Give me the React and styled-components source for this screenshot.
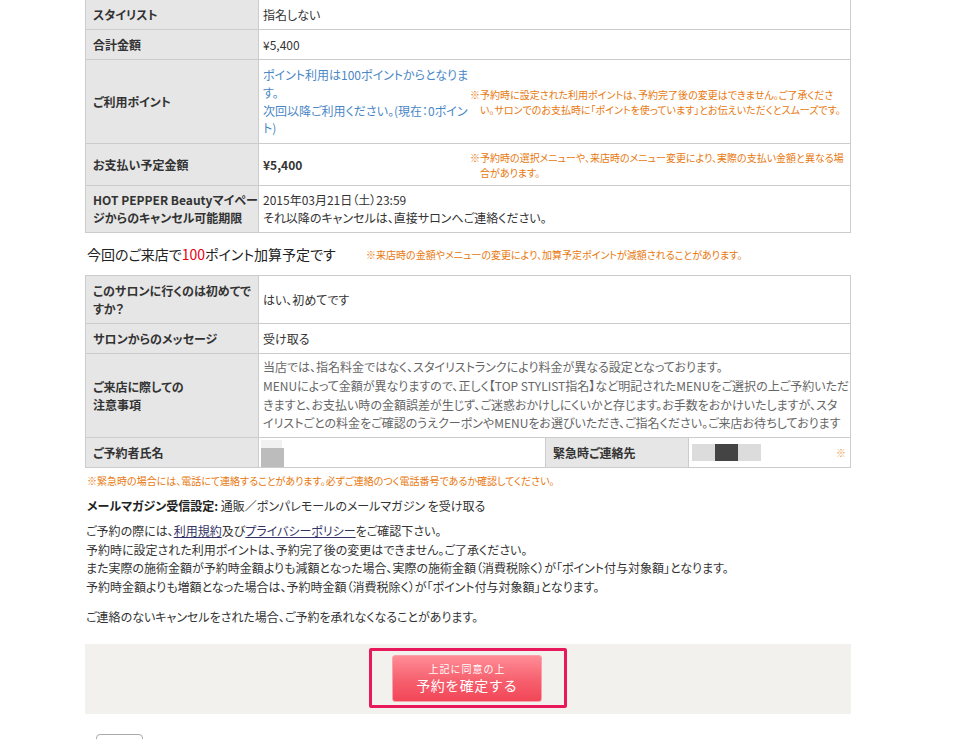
import styled, { createGlobalStyle } from 'styled-components';

const GlobalStyle = createGlobalStyle`
  body {
    margin: 0;
    background: #fff;
    color: #333;
    font-family: "Noto Sans CJK JP", "Noto Sans", sans-serif;
    font-size: 12px;
    font-feature-settings: "palt";
  }
`;

const Page = styled.div`
  width: 766px;
  margin: -1px 0 0 85px;
`;

const Table = styled.table`
  width: 100%;
  border-collapse: collapse;
  table-layout: fixed;
`;

const Col = styled.col`
  width: ${p => (p.$w ? `${p.$w}px` : 'auto')};
`;

const Row = styled.tr`
  height: ${p => p.$h}px;
`;

const Th = styled.th`
  background: #e6e6e6;
  border: 1px solid #ccc;
  padding: 0 7px;
  text-align: left;
  font-weight: bold;
  line-height: 18px;
  white-space: nowrap;
`;

const Td = styled.td`
  border: 1px solid #ccc;
  padding: ${p => p.$pad || '0 4px'};
  line-height: ${p => p.$lh || 18}px;
  color: ${p => (p.$muted ? '#666' : '#333')};
  vertical-align: ${p => p.$va || 'middle'};
  white-space: nowrap;
  overflow: hidden;
`;

const Split = styled.div`
  display: flex;
  align-items: center;
`;

const PointInfo = styled.div`
  width: 207px;
  flex: none;
  color: #4a87c6;
  line-height: 17.7px;
`;

const Amount = styled.div`
  width: 207px;
  flex: none;
  font-weight: bold;
`;

const Note = styled.p`
  margin: 0;
  padding-left: 1em;
  text-indent: -1em;
  font-size: 10px;
  line-height: 15px;
  color: #e8780e;
  white-space: nowrap;
`;

const Lead = styled.div`
  display: flex;
  align-items: center;
  height: 42px;
  padding-left: 2px;
`;

const LeadTitle = styled.h3`
  margin: 0;
  width: 279px;
  flex: none;
  font-size: 14px;
  font-weight: normal;
  color: #222;
`;

const Em = styled.span`
  color: #e60012;
`;

const Blur = styled.div`
  display: flex;
  flex-direction: column;
  align-items: flex-start;
`;

const Swatch = styled.span`
  display: block;
  width: ${p => p.$w}px;
  height: ${p => p.$h}px;
  background: ${p => p.$c};
`;

const Contact = styled.div`
  display: flex;
  align-items: center;
`;

const Mark = styled.span`
  margin-left: auto;
  font-size: 10px;
  color: #e8a050;
`;

const Caution = styled.p`
  margin: 5px 0 0 2px;
  font-size: 10px;
  line-height: 15px;
  color: #e8780e;
`;

const MailSetting = styled.p`
  margin: 9px 0 0 2px;
  line-height: 18px;
  b {
    font-weight: bold;
    color: #222;
  }
`;

const Text = styled.p`
  margin: ${p => p.$m || '7px 0 0 1px'};
  line-height: 18.7px;
`;

const Link = styled.a`
  color: #333366;
  text-decoration: underline;
`;

const ConfirmBar = styled.div`
  display: flex;
  justify-content: center;
  margin-top: 17px;
  padding: 4px 0 6px;
  background: #f2f1ee;
`;

const Highlight = styled.div`
  display: flex;
  justify-content: center;
  width: 198px;
  padding: 4px 22px 3px 20px;
  box-sizing: border-box;
  border: 3px solid #e8185c;
  border-radius: 2px;
`;

const ConfirmButton = styled.button`
  display: flex;
  flex-direction: column;
  align-items: center;
  justify-content: center;
  gap: 1px;
  width: 150px;
  height: 47px;
  flex: none;
  padding: 0;
  border: 1px solid #f8a2ab;
  border-radius: 3px;
  background: linear-gradient(#ff8c96, #f6606e 55%, #f24657);
  color: #fff;
  font-family: inherit;
  cursor: pointer;
`;

const ButtonSub = styled.span`
  font-size: 10px;
  letter-spacing: 1px;
  line-height: 13px;
  color: #fff;
`;

const ButtonMain = styled.span`
  font-size: 14px;
  line-height: 19px;
  letter-spacing: 0.5px;
`;

const BackButton = styled.button`
  display: block;
  margin: 20px 0 0 11px;
  width: 47px;
  height: 44px;
  border: 1px solid #aaa;
  border-radius: 4px;
  background: #fff;
  font-family: inherit;
  font-size: 12px;
  color: #333;
`;

export default function App() {
  return (
    <>
      <GlobalStyle />
      <Page>
        <Table>
          <colgroup>
            <Col $w={173} />
            <Col />
          </colgroup>
          <tbody>
            <Row $h={30}>
              <Th>スタイリスト</Th>
              <Td>指名しない</Td>
            </Row>
            <Row $h={30}>
              <Th>合計金額</Th>
              <Td>¥5,400</Td>
            </Row>
            <Row $h={84}>
              <Th>ご利用ポイント</Th>
              <Td>
                <Split>
                  <PointInfo>
                    ポイント利用は100ポイントからとなりま<br />
                    す。<br />
                    次回以降ご利用ください。(現在：0ポイン<br />
                    ト)
                  </PointInfo>
                  <Note>
                    ※予約時に設定された利用ポイントは、予約完了後の変更はできません。ご了承くださ<br />
                    い。サロンでのお支払時に「ポイントを使っています」とお伝えいただくとスムーズです。
                  </Note>
                </Split>
              </Td>
            </Row>
            <Row $h={42}>
              <Th>お支払い予定金額</Th>
              <Td>
                <Split>
                  <Amount>¥5,400</Amount>
                  <Note>
                    ※予約時の選択メニューや、来店時のメニュー変更により、実際の支払い金額と異なる場<br />
                    合があります。
                  </Note>
                </Split>
              </Td>
            </Row>
            <Row $h={47}>
              <Th>
                HOT PEPPER Beautyマイペー<br />
                ジからのキャンセル可能期限
              </Th>
              <Td>
                2015年03月21日（土）23:59<br />
                それ以降のキャンセルは、直接サロンへご連絡ください。
              </Td>
            </Row>
          </tbody>
        </Table>

        <Lead>
          <LeadTitle>
            今回のご来店で<Em>100</Em>ポイント加算予定です
          </LeadTitle>
          <Note>※来店時の金額やメニューの変更により、加算予定ポイントが減額されることがあります。</Note>
        </Lead>

        <Table>
          <colgroup>
            <Col $w={173} />
            <Col $w={287} />
            <Col $w={143} />
            <Col />
          </colgroup>
          <tbody>
            <Row $h={48}>
              <Th>
                このサロンに行くのは初めてで<br />
                すか？
              </Th>
              <Td colSpan={3}>はい、初めてです</Td>
            </Row>
            <Row $h={30}>
              <Th>サロンからのメッセージ</Th>
              <Td colSpan={3}>受け取る</Td>
            </Row>
            <Row $h={84}>
              <Th>
                ご来店に際しての<br />
                注意事項
              </Th>
              <Td colSpan={3} $lh={18.8} $muted>
                当店では、指名料金ではなく、スタイリストランクにより料金が異なる設定となっております。<br />
                MENUによって金額が異なりますので、正しく【TOP STYLIST指名】など明記されたMENUをご選択の上ご予約いただ<br />
                きますと、お支払い時の金額誤差が生じず、ご迷惑おかけしにくいかと存じます。お手数をおかけいたしますが、スタ<br />
                イリストごとの料金をご確認のうえクーポンやMENUをお選びいただき、ご指名ください。ご来店お待ちしております
              </Td>
            </Row>
            <Row $h={30}>
              <Th>ご予約者氏名</Th>
              <Td $pad="0 2px" $va="bottom">
                <Blur>
                  <Swatch $w={21} $h={8} $c="#f1f1f1" />
                  <Swatch $w={23} $h={19} $c="#bcbcbc" />
                </Blur>
              </Td>
              <Th>緊急時ご連絡先</Th>
              <Td $pad="0 4px 0 3px">
                <Contact>
                  <Swatch $w={23} $h={17} $c="#dcdcdc" />
                  <Swatch $w={23} $h={17} $c="#444" />
                  <Swatch $w={23} $h={17} $c="#dcdcdc" />
                  <Mark>※</Mark>
                </Contact>
              </Td>
            </Row>
          </tbody>
        </Table>

        <Caution>※緊急時の場合には、電話にて連絡することがあります。必ずご連絡のつく電話番号であるか確認してください。</Caution>

        <MailSetting>
          <b>メールマガジン受信設定:</b> 通販／ポンパレモールのメールマガジン を受け取る
        </MailSetting>

        <Text>
          ご予約の際には、<Link href="#">利用規約</Link>及び<Link href="#">プライバシーポリシー</Link>をご確認下さい。<br />
          予約時に設定された利用ポイントは、予約完了後の変更はできません。ご了承ください。<br />
          また実際の施術金額が予約時金額よりも減額となった場合、実際の施術金額（消費税除く）が「ポイント付与対象額」となります。<br />
          予約時金額よりも増額となった場合は、予約時金額（消費税除く）が「ポイント付与対象額」となります。
        </Text>
        <Text $m="11px 0 0 1px">ご連絡のないキャンセルをされた場合、ご予約を承れなくなることがあります。</Text>

        <ConfirmBar>
          <Highlight>
            <ConfirmButton type="button">
              <ButtonSub>上記に同意の上</ButtonSub>
              <ButtonMain>予約を確定する</ButtonMain>
            </ConfirmButton>
          </Highlight>
        </ConfirmBar>

        <BackButton type="button">戻る</BackButton>
      </Page>
    </>
  );
}
